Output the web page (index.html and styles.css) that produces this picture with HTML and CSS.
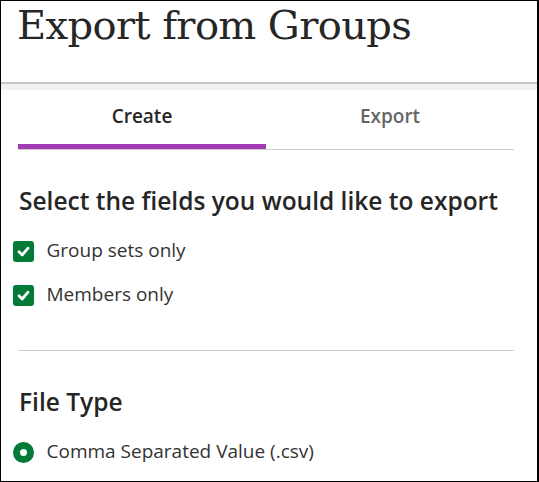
FILE: index.html
```html
<!DOCTYPE html>
<html lang="en">
<head>
<meta charset="utf-8">
<title>Export from Groups</title>
<link rel="stylesheet" href="styles.css">
</head>
<body>
<div class="frame">
  <header class="header">
    <h1 class="title">Export from Groups</h1>
  </header>
  <div class="band"></div>
  <main class="content">
    <nav class="tabs">
      <div class="tab tab-active">Create</div>
      <div class="tab">Export</div>
    </nav>
    <h2 class="section-title first">Select the fields you would like to export</h2>
    <div class="options">
      <label class="option">
        <span class="checkbox"><svg viewBox="0 0 21 21" width="21" height="21"><path d="M6 10.8 L9.2 14 L15 7.2" fill="none" stroke="#fff" stroke-width="2.8" stroke-linecap="round" stroke-linejoin="round"/></svg></span>
        <span class="option-label">Group sets only</span>
      </label>
      <label class="option">
        <span class="checkbox"><svg viewBox="0 0 21 21" width="21" height="21"><path d="M6 10.8 L9.2 14 L15 7.2" fill="none" stroke="#fff" stroke-width="2.8" stroke-linecap="round" stroke-linejoin="round"/></svg></span>
        <span class="option-label">Members only</span>
      </label>
    </div>
    <hr class="divider">
    <h2 class="section-title second">File Type</h2>
    <div class="options radio-options">
      <label class="option">
        <span class="radio"></span>
        <span class="option-label">Comma Separated Value (.csv)</span>
      </label>
    </div>
  </main>
</div>
</body>
</html>
```

FILE: styles.css
```css
html, body {
  margin: 0;
  padding: 0;
  background: #fff;
}

.frame {
  box-sizing: border-box;
  width: 539px;
  height: 482px;
  border: 1px solid #000;
  border-right-width: 2px;
  overflow: hidden;
  font-family: "Open Sans", "Noto Sans", sans-serif;
  color: #262626;
}

.header {
  box-sizing: border-box;
  height: 83px;
  border-bottom: 2px solid #c6c6c6;
}

.title {
  margin: 0;
  padding-left: 16px;
  font-family: "DejaVu Serif", "Liberation Serif", serif;
  font-weight: normal;
  font-size: 40px;
  letter-spacing: -0.6px;
  line-height: 48px;
  color: #262626;
}

.band {
  height: 6px;
  background: #f2f2f2;
}

.content {
  padding: 0 23px 0 17px;
}

.tabs {
  display: grid;
  grid-template-columns: 1fr 1fr;
  border-bottom: 1px solid #cdcdcd;
}

.tab {
  text-align: center;
  font-size: 19px;
  line-height: 24px;
  font-weight: 600;
  color: #666;
  padding: 14px 0 16px;
  border-bottom: 5px solid transparent;
}

.tab-active {
  color: #262626;
  border-bottom-color: #a33bb5;
}

.section-title {
  margin: 0;
  font-size: 24.5px;
  line-height: 32px;
  font-weight: 600;
  color: #262626;
  padding-left: 1px;
}

.section-title.first {
  margin-top: 34.5px;
}

.section-title.second {
  margin-top: 35px;
}

.options {
  display: flex;
  flex-direction: column;
  gap: 19.5px;
  margin-top: 21.5px;
  margin-left: -5px;
}

.radio-options {
  margin-top: 20.5px;
}

.option {
  display: flex;
  align-items: flex-start;
  height: 24px;
  gap: 12.5px;
}

.checkbox {
  width: 21px;
  height: 21px;
  margin-top: 3px;
  border-radius: 3px;
  background: #037b36;
  display: block;
  flex: none;
}

.checkbox svg {
  display: block;
}

.radio {
  box-sizing: border-box;
  width: 21px;
  height: 21px;
  margin-top: 3px;
  border-radius: 50%;
  border: 7px solid #037b36;
  background: #fff;
  flex: none;
}

.option-label {
  font-size: 19px;
  line-height: 24px;
  color: #333;
}

.divider {
  margin: 44.5px 0 0;
  border: 0;
  border-top: 1px solid #cdcdcd;
  height: 0;
}
```
